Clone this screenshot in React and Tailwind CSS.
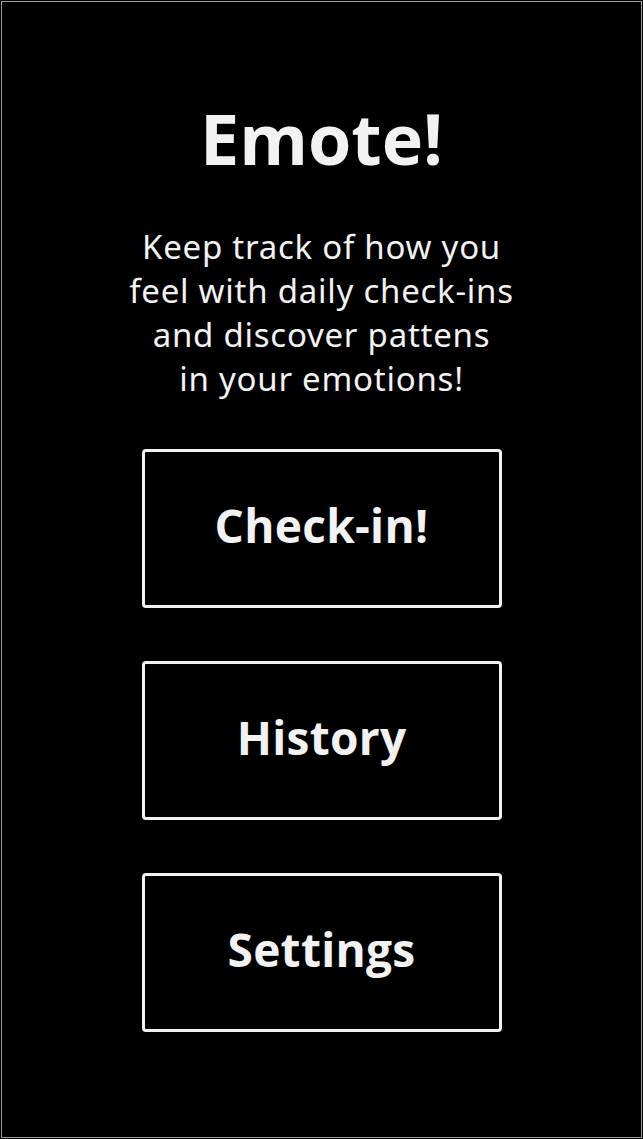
export default function App() {
  const buttons = ['Check-in!', 'History', 'Settings'];

  return (
    <div className="h-[1139px] w-[643px] bg-black p-px" style={{ fontFamily: '"Open Sans", "Noto Sans", sans-serif' }}>
      <div className="flex h-full flex-col items-center border border-[#9e9e9e] bg-black text-[#f2f2f2]">
        <h1 className="mt-[101px] text-[70px] font-bold leading-[70px]">Emote!</h1>

        <p
          className="mt-[52px] text-center text-[33px] leading-[44px] tracking-[0.75px]"
          style={{ fontFamily: '"Noto Sans", "Open Sans", sans-serif' }}
        >
          Keep track of how you
          <br />
          feel with daily check-ins
          <br />
          and discover pattens
          <br />
          in your emotions!
        </p>

        <div className="mt-[48px] flex flex-col gap-[53px]">
          {buttons.map(label => (
            <button
              key={label}
              className="flex h-[159px] w-[360px] items-center justify-center rounded-[4px] border-[3px] border-[#f2f2f2] bg-black pb-[6px] text-[46px] font-bold tracking-[0.3px] text-[#f2f2f2]"
            >
              {label}
            </button>
          ))}
        </div>
      </div>
    </div>
  );
}
